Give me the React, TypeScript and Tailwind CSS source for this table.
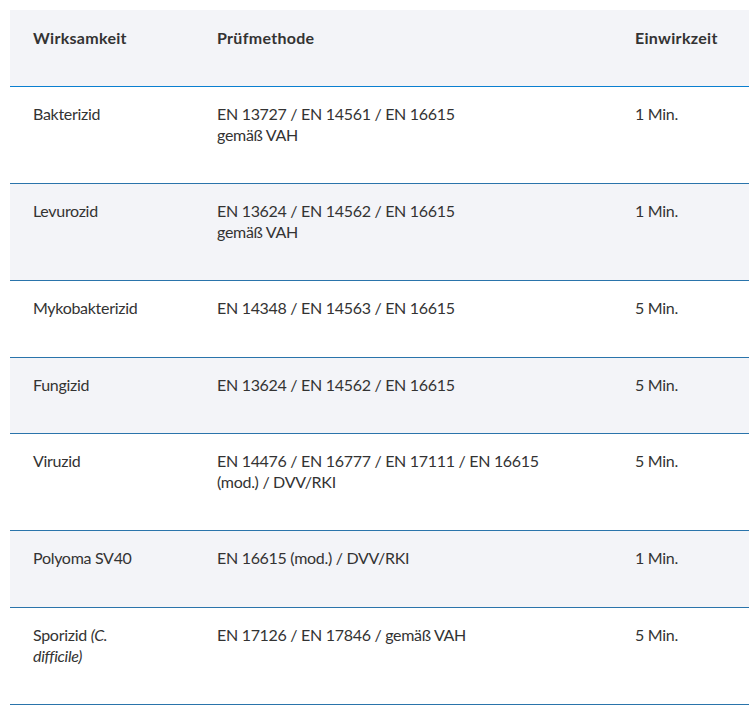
import React from "react";

type Row = { name: React.ReactNode; method: React.ReactNode; time: string };

const rows: Row[] = [
  { name: "Bakterizid", method: <>EN 13727 / EN 14561 / EN 16615<br />gemäß VAH</>, time: "1 Min." },
  { name: "Levurozid", method: <>EN 13624 / EN 14562 / EN 16615<br />gemäß VAH</>, time: "1 Min." },
  { name: "Mykobakterizid", method: "EN 14348 / EN 14563 / EN 16615", time: "5 Min." },
  { name: "Fungizid", method: "EN 13624 / EN 14562 / EN 16615", time: "5 Min." },
  { name: "Viruzid", method: <>EN 14476 / EN 16777 / EN 17111 / EN 16615<br />(mod.) / DVV/RKI</>, time: "5 Min." },
  { name: "Polyoma SV40", method: "EN 16615 (mod.) / DVV/RKI", time: "1 Min." },
  { name: <>Sporizid <i>(C.</i><br /><i>difficile)</i></>, method: "EN 17126 / EN 17846 / gemäß VAH", time: "5 Min." },
];

export default function App() {
  return (
    <div className="min-h-[718px] w-[749px] bg-white pl-[10px] pt-[10px]" style={{ fontFamily: "Lato, 'Open Sans', sans-serif" }}>
      <table className="w-[739px] table-fixed border-collapse text-[16px] leading-[21px] tracking-[-0.3px] text-[#333333]">
        <colgroup>
          <col className="w-[184px]" />
          <col className="w-[418px]" />
          <col className="w-[137px]" />
        </colgroup>
        <thead>
          <tr className="bg-[#f3f4f8] border-b border-[#0a7fd0]">
            <th className="h-[76px] pl-[23px] pt-[17px] pb-[37px] text-left align-top font-bold tracking-[0.3px]">Wirksamkeit</th>
            <th className="pl-[23px] pt-[17px] pb-[37px] text-left align-top font-bold tracking-[0.3px]">Prüfmethode</th>
            <th className="pl-[23px] pt-[17px] pb-[37px] text-left align-top font-bold tracking-[0.3px]">Einwirkzeit</th>
          </tr>
        </thead>
        <tbody>
          {rows.map((r, i) => (
            <tr key={i} className={`border-b border-[#2a74ab] ${i % 2 === 1 ? "bg-[#f3f4f8]" : "bg-white"}`}>
              <td className="pl-[23px] pr-[10px] pt-[16px] pb-[38.4px] align-top">{r.name}</td>
              <td className="pl-[23px] pt-[16px] pb-[38.4px] align-top whitespace-nowrap">{r.method}</td>
              <td className="pl-[23px] pt-[16px] pb-[38.4px] align-top">{r.time}</td>
            </tr>
          ))}
        </tbody>
      </table>
    </div>
  );
}
